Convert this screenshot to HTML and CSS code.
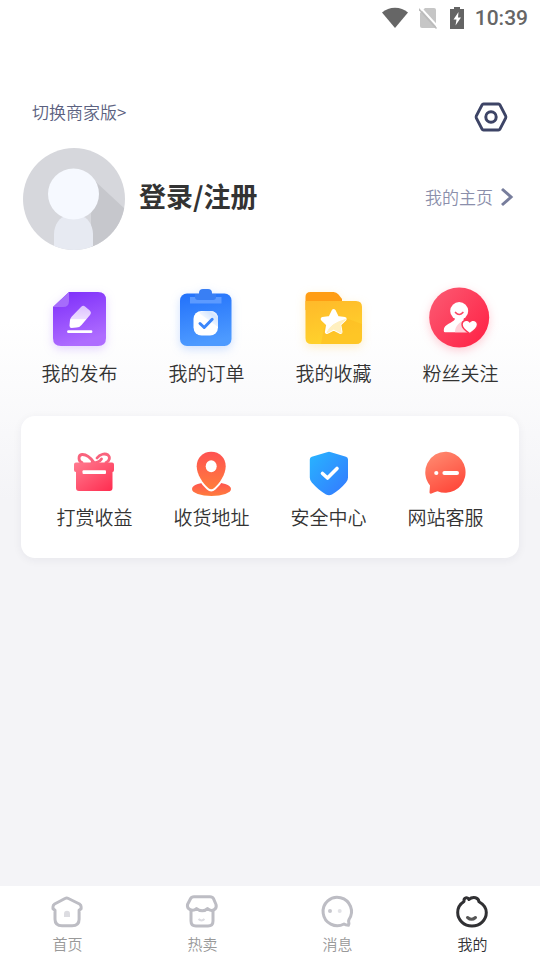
FILE: index.html
```html
<!DOCTYPE html>
<html lang="zh-CN">
<head>
<meta charset="utf-8">
<meta name="viewport" content="width=device-width, initial-scale=1">
<title>我的</title>
<link rel="stylesheet" href="styles.css">
</head>
<body>
<div class="status">
  <svg width="26" height="22" viewBox="0 0 26 22"><path d="M0 5.500C7-1 19-1 26 5.500L13 21Z" fill="#666"/></svg>
  <svg width="20" height="22" viewBox="0 0 20 22"><path d="M6 1h9q2 0 2 2v17q0 1-1.500 1H3q-2 0-2-2V6Z" fill="#c6c6c6"/><path d="M0-1 20 21" stroke="#fff" stroke-width="2"/><path d="M-1 1 17.500 21.500" stroke="#bbb" stroke-width="1.500"/></svg>
  <svg width="14" height="22" viewBox="0 0 14 22"><path d="M4 0h6v2h4v20H0V2h4Z" fill="#646464"/><path d="M8.500 5 3.500 12.500h3L5.500 18.500 11 10.500H8Z" fill="#fff"/></svg>
  <span class="clock">10:39</span>
</div>

<main class="page">
  <header class="top">
    <a class="switch" href="#merchant">切换商家版&gt;</a>
    <button class="settings" type="button" aria-label="设置">
      <svg width="36" height="36" viewBox="0 0 36 36" fill="none" stroke="#3d4466"><path d="M10.500 5h15q1 0 1.500 1L32.700 17q.5 1 0 2L27 30q-.5 1-1.500 1h-15q-1 0-1.500-1L3.300 19q-.5-1 0-2L9 6q.5-1 1.500-1Z" stroke-width="2.800"/><circle cx="18" cy="18" r="5.200" stroke-width="3"/></svg>
    </button>
  </header>

  <section class="profile">
    <svg class="avatar" width="102" height="102" viewBox="0 0 102 102">
      <defs><clipPath id="round"><circle cx="51" cy="51" r="51"/></clipPath></defs>
      <g clip-path="url(#round)">
        <path d="M0 0h102v102H0Z" fill="#d6d7dc"/>
        <path d="M73 34 102 61v41H68V66Z" fill="#c6c7cc"/>
        <path d="M31 102V86c0-9 6-18 13-18h13c7 0 13 9 13 18v16Z" fill="#e7eaf2"/>
        <circle cx="50.500" cy="46" r="25.500" fill="#f6f9ff"/>
      </g>
    </svg>
    <h1 class="name"><a href="#login">登录/注册</a></h1>
    <a class="home" href="#profile">我的主页
      <svg width="14" height="20" viewBox="0 0 14 20" fill="none" stroke="#777d9c" stroke-width="3"><path d="m2 2 9 8-9 8"/></svg>
    </a>
  </section>

  <nav class="grid shortcuts">
    <a class="item" href="#posts">
      <svg class="glow violet" width="71" height="72" viewBox="0 0 71 72">
        <defs><linearGradient id="g1" x1="0" y1="0" x2=".3" y2="1"><stop stop-color="#7c2cfa"/><stop offset="1" stop-color="#ae6cff"/></linearGradient><linearGradient id="p1" x1="0" y1="0" x2="0" y2="1"><stop stop-color="#dcc0ff"/><stop offset=".6" stop-color="#eedfff"/><stop offset=".62" stop-color="#fff"/></linearGradient></defs>
        <path d="M25 8h29q8 0 8 8v38q0 8-8 8H17q-8 0-8-8V23Z" fill="url(#g1)"/>
        <path d="M25 8v9q0 6-6 6H9Z" fill="#a66cfb"/>
        <path d="M25.500 41.500 26 36q.3-2 1.800-3.500L37 23q2-2 4-.6l4.500 3.800q2.500 2.300.5 4.800L37.500 41q-2 2.500-5 2.600l-5 .4q-2 0-2-2.500Z" fill="url(#p1)"/>
        <path d="M24.500 47.700h22.500" stroke="#fff" stroke-width="2.800" stroke-linecap="round"/>
      </svg>
      <span>我的发布</span>
    </a>
    <a class="item" href="#orders">
      <svg class="glow blue" width="71" height="72" viewBox="0 0 71 72">
        <defs><linearGradient id="g2" x1="0" y1="0" x2=".2" y2="1"><stop stop-color="#2271fb"/><stop offset="1" stop-color="#4d9aff"/></linearGradient><linearGradient id="p2" x1="1" y1="0" x2="0" y2="1"><stop stop-color="#fff"/><stop offset=".25" stop-color="#d3e5ff"/><stop offset=".7" stop-color="#fff"/></linearGradient></defs>
        <rect x="9" y="9.500" width="51.500" height="52.500" rx="7" fill="url(#g2)"/>
        <path d="M19 13h31.500v6.500H19Z" fill="#5c9aff"/>
        <path d="M28 13V9q0-4 4-4h5q4 0 4 4v1h4v3q0 3-3 3H27q-3 0-3-3v-3h4Z" fill="#397ff4"/>
        <rect x="22.500" y="27" width="24.500" height="24.500" rx="8" fill="#fff"/>
        <path d="M35 27h4q8 0 8 8v8L28 29q2-2 7-2Z" fill="url(#p2)"/>
        <path d="m29 39.500 4.200 4 8-8.200" fill="none" stroke="#3b86fb" stroke-width="3" stroke-linecap="round" stroke-linejoin="round"/>
      </svg>
      <span>我的订单</span>
    </a>
    <a class="item" href="#favorites">
      <svg class="glow yellow" width="71" height="72" viewBox="0 0 71 72">
        <defs><linearGradient id="g3" x1="0" y1="0" x2=".3" y2="1"><stop stop-color="#ffb92a"/><stop offset="1" stop-color="#ffd22c"/></linearGradient></defs>
        <path d="M7.500 26V13q0-5 5-5h23q3 0 5 2.500l3.500 4.500v6Z" fill="#ff9d14"/>
        <path d="M7.500 17H58q6 0 6 6v31q0 6-6 6H13.500q-6 0-6-6Z" fill="url(#g3)"/>
        <path d="m26 44 10-14 28 10v14q0 6-6 6H23Z" fill="#fcb91e" opacity=".45"/>
        <path d="m35.700 27 3.400 6.900 7.600 1.100-5.500 5.400 1.300 7.600-6.800-3.600-6.800 3.600 1.300-7.600-5.500-5.400 7.600-1.100Z" fill="#fff" stroke="#fff" stroke-width="4" stroke-linejoin="round"/>
        <path d="M47.500 35.500 42 40.500l1.300 8.500-7.600-3.800-6.700 3.500q3-9 18.500-13.200Z" fill="#fff0c0" stroke="#fff0c0" stroke-linejoin="round"/>
      </svg>
      <span>我的收藏</span>
    </a>
    <a class="item" href="#followers">
      <svg class="glow red" width="71" height="72" viewBox="0 0 71 72">
        <defs><linearGradient id="g4" x1="0" y1="0" x2="1" y2=".8"><stop stop-color="#fb5c74"/><stop offset="1" stop-color="#ff2447"/></linearGradient></defs>
        <circle cx="34.200" cy="33.500" r="30" fill="url(#g4)"/>
        <path d="M30 31v4c-2 4-11.200 5-11.200 11v1q0 1.300 1.300 1.300H43V42c-1-2-4.500-4-4.500-7v-4Z" fill="#fff"/>
        <path d="M38.500 36.500C32 39.500 30 44 30 48.300h13V42q-3.500-2.500-4.500-5.500Z" fill="#ffd3da"/>
        <circle cx="34.200" cy="27" r="9" fill="#fff"/>
        <path d="M30.500 28.500q3.700 4 7.400 0" fill="none" stroke="#fb4562" stroke-width="1.700" stroke-linecap="round"/>
        <path d="M44.800 48.800c-4.500-3-7-5.300-7-8.200 0-4 5-4.700 7-1.600 2-3.100 7-2.400 7 1.600 0 2.900-2.500 5.200-7 8.200Z" fill="#fff" stroke="#fd3655" stroke-width="3" paint-order="stroke" stroke-linejoin="round"/>
      </svg>
      <span>粉丝关注</span>
    </a>
  </nav>

  <nav class="grid card">
    <a class="item" href="#rewards">
      <svg width="47" height="48" viewBox="0 0 47 48">
        <defs><linearGradient id="g5" x1="0" y1="0" x2="1" y2="1"><stop stop-color="#ff7b90"/><stop offset="1" stop-color="#ff2b4e"/></linearGradient></defs>
        <path d="M23 13.500C19 8 15 5.200 11 5.500c-4 .5-4 6.500 0 8M21 13.500c4 1 8-1 9.500-3.500 M26 9c3-4 8-5 11-3 2.500 2 1.500 6.500-2 7.500" fill="none" stroke="#f9637d" stroke-width="2.800" stroke-linecap="round"/>
        <path d="M5 13.500h36q2 0 2 2V21q0 2-1.500 2v16q0 3-3 3H8q-3 0-3-3V23q-2 0-2-2v-5.500q0-2 2-2Z" fill="url(#g5)"/>
        <rect x="11.500" y="21.300" width="23.500" height="3.600" rx="1" fill="#fff"/>
      </svg>
      <span>打赏收益</span>
    </a>
    <a class="item" href="#address">
      <svg width="47" height="48" viewBox="0 0 47 48">
        <defs><linearGradient id="g6" x1="0" y1="0" x2="0" y2="1"><stop stop-color="#ff5252"/><stop offset="1" stop-color="#ff7d3c"/></linearGradient></defs>
        <ellipse cx="23.500" cy="40" rx="19.500" ry="7" fill="url(#g6)"/>
        <path d="M23.200 2.700c8.500 0 14.500 6.300 14.500 14.500 0 8-6 17-11.500 21.800q-3 2.600-6 0C14.700 34.200 8.700 25.200 8.700 17.200 8.700 9 14.700 2.700 23.200 2.700Z" fill="url(#g6)" stroke="#fff" stroke-width="4" paint-order="stroke"/>
        <ellipse cx="23.200" cy="17.300" rx="5.500" ry="6" fill="#fff"/>
      </svg>
      <span>收货地址</span>
    </a>
    <a class="item" href="#security">
      <svg width="47" height="48" viewBox="0 0 47 48">
        <defs><linearGradient id="g7" x1="0" y1="0" x2="1" y2="1"><stop stop-color="#28b5ff"/><stop offset="1" stop-color="#3478ff"/></linearGradient></defs>
        <path d="M22 3.200q2-.8 4 0l15 4.600q2 .7 2 2.700v18q0 3-2 5c-4 5-9 9-14 12q-3 1.600-6 0c-5-3-10-7-14.200-12q-2-2-2-5v-18q0-2 2-2.700Z" fill="url(#g7)"/>
        <path d="m17.500 24.500 5 4.500 9.500-9.500" fill="none" stroke="#fff" stroke-width="3.600" stroke-linecap="round" stroke-linejoin="round"/>
      </svg>
      <span>安全中心</span>
    </a>
    <a class="item" href="#service">
      <svg width="47" height="48" viewBox="0 0 47 48">
        <defs><linearGradient id="g8" x1=".2" y1="0" x2=".7" y2="1"><stop stop-color="#ff8a70"/><stop offset="1" stop-color="#ff4638"/></linearGradient></defs>
        <path d="M24.500 2.700a20.300 20.600 0 1 1-9 39.600q-3 1-6 2.200-2.200.6-2-1.500l.5-6.500A20.300 20.600 0 0 1 24.500 2.700Z" fill="url(#g8)"/>
        <circle cx="14.300" cy="24" r="2.100" fill="#fff"/><path d="M22.400 24H35" stroke="#fff" stroke-width="4" stroke-linecap="round"/>
      </svg>
      <span>网站客服</span>
    </a>
  </nav>
</main>

<nav class="tabs">
  <a class="tab" href="#index">
    <svg width="35" height="36" viewBox="0 0 35 36" fill="none" stroke="#bdbdc4" stroke-width="3" stroke-linejoin="round"><path d="M15 4.500q1.700-.8 3.400 0L29.500 10q1.600 1 1.600 2.800v2l-2 1.500v9q0 6.500-7 6.500H12q-7 0-7-6.500v-9l-2-1.500v-2q0-1.800 1.600-2.800Z"/><path d="M14 23v-3.200a3 3 0 0 1 6 0V23Z" fill="#dcdce1" stroke="none"/></svg>
    <span>首页</span>
  </a>
  <a class="tab" href="#hot">
    <svg width="35" height="36" viewBox="0 0 35 36" fill="none" stroke="#bdbdc4" stroke-width="3" stroke-linejoin="round"><path d="M9 2.700h16q2.500 0 3.500 2L31 10.500c1.500 5-4.500 8-8.500 4-2.500 3-8 3-11 0C7.500 18.500 1.500 15 2.500 10.500L5.500 4.700q1-2 3.500-2Z"/><path d="M6 16.500V27q0 5 5 5h12q5 0 5-5V16.500"/><path d="M13.500 25q3 3 6 0" stroke="#dcdce1" stroke-width="2"/></svg>
    <span>热卖</span>
  </a>
  <a class="tab" href="#messages">
    <svg width="35" height="36" viewBox="0 0 35 36" fill="none" stroke="#bdbdc4" stroke-width="3" stroke-linejoin="round"><path d="M29 25.500A14.200 14.200 0 1 0 24 30q1.500 1 4.500 1.200.8-1 .3-2.700-.5-1.500.2-3Z"/><circle cx="10" cy="17" r="2" fill="#c8c8ce" stroke="none"/><circle cx="19.700" cy="17" r="2" fill="#e2e2e6" stroke="none"/></svg>
    <span>消息</span>
  </a>
  <a class="tab active" href="#me" aria-current="page">
    <svg width="35" height="36" viewBox="0 0 35 36" fill="none" stroke="#303033" stroke-width="3" stroke-linejoin="round" stroke-linecap="round"><path d="M14 5.500Q16.500 3 20.500 3.700q3 .8 3.500 4C29 10.500 31.300 14.500 31.300 18.500 31.300 26 25 32 17 32S2.700 26 2.700 18.500C2.700 14 5 10 9 7.500 8.500 3.500 12.500 2.500 14 5.500Z"/><path d="M12.500 23.500q4 3.500 8 0" stroke="#555"/></svg>
    <span>我的</span>
  </a>
</nav>
</body>
</html>
```

FILE: styles.css
```css
* {
  box-sizing: border-box;
}

body {
  margin: 0;
  min-height: 100vh;
  display: flex;
  flex-direction: column;
  background: linear-gradient(#fff 320px, #f4f4f7 500px);
  color: #333;
  font-family: "Noto Sans CJK SC", sans-serif;
  font-weight: 350;
}

a {
  color: inherit;
  text-decoration: none;
}

svg {
  display: block;
  flex: none;
}

.status {
  height: 36px;
  padding: 0 12px;
  display: flex;
  align-items: center;
  justify-content: flex-end;
  gap: 11px;
}

.clock {
  color: #666;
  font: 500 21px/24px Roboto, sans-serif;
}

.page {
  flex: 1;
  padding-top: 63px;
}

.top {
  display: flex;
  justify-content: space-between;
  align-items: flex-start;
  padding: 0 31px 0 32px;
}

.switch {
  color: #5b6180;
  font-size: 17px;
  line-height: 26px;
}

.settings {
  padding: 0;
  border: 0;
  background: none;
}

.profile {
  display: flex;
  align-items: center;
  margin-top: 13px;
  padding: 0 26px 0 23px;
}

.name {
  flex: 1;
  margin: 0 0 6px 14px;
  font-size: 27px;
  line-height: 40px;
}

.home {
  display: flex;
  align-items: center;
  gap: 7px;
  margin-bottom: 4px;
  color: #8b8fab;
  font-size: 17px;
  line-height: 24px;
}

.grid {
  display: grid;
  grid-template-columns: repeat(4, 1fr);
  font-size: 19px;
  line-height: 26px;
}

.item {
  display: flex;
  flex-direction: column;
  align-items: center;
}

.shortcuts {
  margin-top: 34px;
  padding: 0 16px;
}

.shortcuts .item {
  gap: 4px;
}

.card {
  margin: 30px 21px;
  padding: 33px 15px 28px;
  border-radius: 14px;
  background: #fff;
  box-shadow: 0 2px 10px rgba(40, 40, 60, 0.06);
}

.card .item {
  gap: 7px;
}

.violet {
  filter: drop-shadow(0 3px 5px rgba(150, 90, 255, 0.25));
}

.blue {
  filter: drop-shadow(0 3px 5px rgba(60, 130, 255, 0.25));
}

.yellow {
  filter: drop-shadow(0 3px 5px rgba(255, 190, 40, 0.25));
}

.red {
  filter: drop-shadow(0 3px 5px rgba(255, 60, 90, 0.25));
}

.tabs {
  display: grid;
  grid-template-columns: repeat(4, 1fr);
  padding: 8px 0 6px;
  background: #fff;
  color: #999;
  font-size: 15px;
  line-height: 20px;
}

.tab {
  display: flex;
  flex-direction: column;
  align-items: center;
  gap: 4px;
}

.active {
  color: #303033;
}
```
